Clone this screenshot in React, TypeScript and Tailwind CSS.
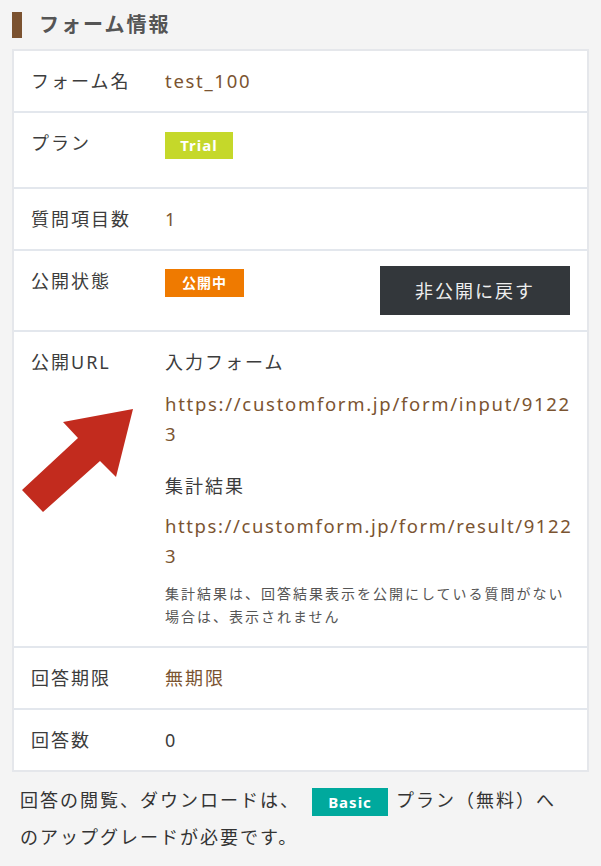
import React from "react";

const font = "font-['Noto_Sans','Noto_Sans_CJK_JP',sans-serif]";

const Row = ({ label, children, className = "" }: { label: string; children: React.ReactNode; className?: string }) => (
  <div className={`grid grid-cols-[134px_1fr] border-b-2 border-[#e3e7ed] pl-[17px] pr-[13px] py-[15px] last:border-b-0 ${className}`}>
    <div className="text-[#3c3c3c]">{label}</div>
    <div>{children}</div>
  </div>
);

const App = () => {
  return (
    <div className={`relative min-h-screen bg-[#f4f4f4] px-3 pt-3 pb-6 ${font} text-[18px] leading-[30px] tracking-[2px]`}>
      {/* Heading */}
      <div className="flex h-[26px] items-center gap-[17px]">
        <span className="h-[26px] w-[10px] bg-[#7b5230]" />
        <h2 className="text-[20px] font-bold text-[#555]">フォーム情報</h2>
      </div>

      {/* Table */}
      <div className="mt-[11px] border-2 border-[#e5e7eb] bg-white">
        <Row label="フォーム名">
          <span className="text-[18.5px] tracking-[1.7px] text-[#7b5431]">test_100</span>
        </Row>
        <Row label="プラン">
          <span className="mt-[4px] mb-[13px] inline-block h-[27px] w-[68px] bg-[#c5d82a] text-center text-[15px] leading-[27px] font-bold tracking-[1px] text-white">
            Trial
          </span>
        </Row>
        <Row label="質問項目数">
          <span className="text-[#7b5431]">1</span>
        </Row>
        <Row label="公開状態">
          <div className="flex items-start justify-between pr-[4px]">
            <span className="mt-[3px] inline-block h-[28px] w-[79px] bg-[#ef7a00] text-center text-[14px] leading-[28px] font-bold tracking-[1px] text-white">
              公開中
            </span>
            <button className="h-[49px] w-[190px] bg-[#33373b] text-[18px] tracking-[2px] text-[#eeeeee]">
              非公開に戻す
            </button>
          </div>
        </Row>
        <Row label="公開URL">
          <div className="pb-[3px]">
            <div className="text-[#3c3c3c]">入力フォーム</div>
            <div className="mt-[12px] whitespace-nowrap text-[18.5px] tracking-[1.7px] text-[#7b5431]">
              https://customform.jp/form/input/9122
              <br />3
            </div>
            <div className="mt-[22px] text-[#3c3c3c]">集計結果</div>
            <div className="mt-[10px] whitespace-nowrap text-[18.5px] tracking-[1.6px] text-[#7b5431]">
              https://customform.jp/form/result/9122
              <br />3
            </div>
            <p className="mt-[11px] pr-[4px] text-[14px] leading-[23px] tracking-[2px] text-[#555]">
              集計結果は、回答結果表示を公開にしている質問がない場合は、表示されません
            </p>
          </div>
        </Row>
        <Row label="回答期限">
          <span className="text-[#7b5431]">無期限</span>
        </Row>
        <Row label="回答数">
          <span className="text-[#3c3c3c]">0</span>
        </Row>
      </div>

      {/* Footer note */}
      <p className="mt-[10px] pl-2 pr-[22px] leading-[37px] text-[#333]">
        回答の閲覧、ダウンロードは、
        <span className="mr-[8px] ml-[12px] inline-block h-[28px] w-[76px] bg-[#00a99d] text-center align-middle text-[15px] leading-[28px] font-bold tracking-[1px] text-white">
          Basic
        </span>
        プラン（無料）へのアップグレードが必要です。
      </p>

      {/* Arrow overlay */}
      <svg className="pointer-events-none absolute left-0 top-0" width="601" height="866" viewBox="0 0 601 866">
        <polygon points="133,409 63,422 78,438 22,490 43,512 100,461 116,477" fill="#c22b1e" />
      </svg>
    </div>
  );
};

export default App;
